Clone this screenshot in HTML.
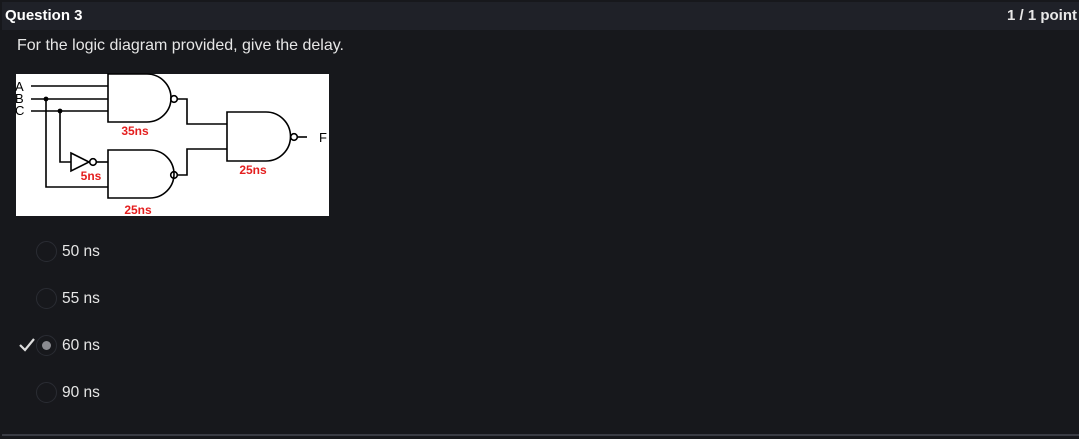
<!DOCTYPE html>
<html><head><meta charset="utf-8"><style>
html,body{margin:0;padding:0;background:#17181c;width:1079px;height:439px;overflow:hidden;font-family:"Liberation Sans",sans-serif;}
.hdr{position:absolute;left:2px;top:2px;width:1077px;height:28px;background:#1f2128;}
.hdr .t{position:absolute;left:3px;top:5px;color:#fff;font-weight:bold;font-size:15px;}
.hdr .p{position:absolute;right:2px;top:5px;color:#e8e8e8;font-weight:bold;font-size:15px;}
.q{position:absolute;left:17px;top:37px;color:#e6e6e6;font-size:16px;}
.opt{position:absolute;left:36px;width:21px;height:21px;border-radius:50%;border:1px solid #2a2c33;box-sizing:border-box;}
.lab{position:absolute;left:62px;color:#e6e6e6;font-size:15.5px;}
.line{position:absolute;left:2px;top:434px;width:1077px;height:2px;background:#3a3c44;}
</style></head><body>
<div class="hdr"><span class="t">Question 3</span><span class="p">1 / 1 point</span></div>
<div class="q">For the logic diagram provided, give the delay.</div>
<svg style="position:absolute;left:0;top:0" width="340" height="220">
<rect x="16" y="74" width="313" height="142" fill="#fff"/>
<g stroke="#000" stroke-width="1.6" fill="none">
<path d="M31 86H108M31 99H108M31 111H108"/>
<path d="M108 74H147A24 24 0 0 1 147 122H108Z"/>
<circle cx="174" cy="99" r="3.3"/>
<path d="M46 99V187H108M60 111V162H71"/>
<path d="M71 153L89 162L71 171Z"/><circle cx="93" cy="162" r="3.3"/>
<path d="M96 162H108"/>
<path d="M108 150H150A24 24 0 0 1 150 198H108Z"/>
<circle cx="174" cy="175" r="3.3"/>
<path d="M177 99H187V124H227M177 175H187V149H227"/>
<path d="M227 112H266A24.5 24.5 0 0 1 266 161H227Z"/>
<circle cx="294" cy="137" r="3.3"/><path d="M297 137H307"/>
</g>
<circle cx="46" cy="99" r="2.4"/><circle cx="60" cy="111" r="2.4"/>
<g font-size="13" fill="#000"><text x="15" y="91">A</text><text x="15" y="103">B</text><text x="15" y="115">C</text><text x="319" y="142">F</text></g>
<g font-size="12" font-weight="bold" fill="#e41e1e" text-anchor="middle"><text x="135" y="135">35ns</text><text x="91" y="180">5ns</text><text x="253" y="174">25ns</text><text x="138" y="214">25ns</text></g>
</svg>
<div class="opt" style="top:241px"></div><div class="lab" style="top:243px">50 ns</div>
<div class="opt" style="top:288px"></div><div class="lab" style="top:290px">55 ns</div>
<div class="opt" style="top:335px"></div><div style="position:absolute;left:42px;top:341px;width:9px;height:9px;border-radius:50%;background:#8a8b90"></div>
<svg style="position:absolute;left:18px;top:337px" width="18" height="16"><path d="M2 8L7 13L16 2" stroke="#ddd" stroke-width="2.2" fill="none"/></svg>
<div class="lab" style="top:337px">60 ns</div>
<div class="opt" style="top:382px"></div><div class="lab" style="top:384px">90 ns</div>
<div class="line"></div>
</body></html>
